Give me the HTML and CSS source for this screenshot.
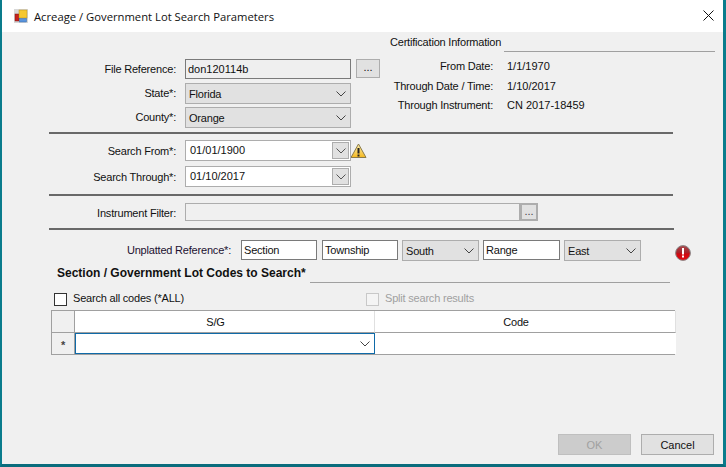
FILE: index.html
```html
<!DOCTYPE html>
<html lang="en">
<head>
    <meta charset="UTF-8">
    <meta name="viewport" content="width=device-width, initial-scale=1.0">
    <title>Acreage / Government Lot Search Parameters</title>
    <link rel="stylesheet" href="styles.css">
</head>
<body>
    <div class="window">
        <div class="titlebar">
            <svg class="app-icon" width="14" height="14" viewBox="0 0 14 14">
                <rect x="0" y="0" width="14" height="14" fill="#d8d8d8"/>
                <rect x="1" y="5" width="4" height="7" fill="#c8201c" stroke="#7a1a18" stroke-width="0.5"/>
                <rect x="5" y="1" width="8" height="8" fill="#f6c832" stroke="#b8901c" stroke-width="0.5"/>
                <rect x="5.5" y="9.5" width="7" height="3.5" fill="#5a94dc" stroke="#3468a8" stroke-width="0.5"/>
            </svg>
            <span class="title">Acreage / Government Lot Search Parameters</span>
            <svg class="close-icon" width="11" height="11" viewBox="0 0 11 11">
                <path d="M.5.5l10 10M10.5.5l-10 10" stroke="#111" stroke-width="1" fill="none"/>
            </svg>
        </div>

        <div class="content">
            <div class="top">
                <div class="file-form">
                    <label>File Reference:</label>
                    <div class="readonly-input">don120114b</div>
                    <button class="dots-btn" type="button">...</button>

                    <label>State*:</label>
                    <div class="combo">Florida
                        <svg class="chevron" width="10" height="6" viewBox="0 0 10 6"><path d="M.5.5L5 5 9.500.5" stroke="#444" fill="none"/></svg>
                    </div>
                    <span></span>

                    <label>County*:</label>
                    <div class="combo">Orange
                        <svg class="chevron" width="10" height="6" viewBox="0 0 10 6"><path d="M.5.5L5 5 9.500.5" stroke="#444" fill="none"/></svg>
                    </div>
                    <span></span>
                </div>

                <div class="cert">
                    <div class="cert-head">
                        <span>Certification Information</span>
                        <div class="thin-line"></div>
                    </div>
                    <div class="cert-grid">
                        <span class="cert-label">From Date:</span><span class="value">1/1/1970</span>
                        <span class="cert-label">Through Date / Time:</span><span class="value">1/10/2017</span>
                        <span class="cert-label">Through Instrument:</span><span class="value">CN 2017-18459</span>
                    </div>
                </div>
            </div>

            <div class="rule"></div>

            <div class="dates">
                <label>Search From*:</label>
                <div class="date-field">01/01/1900
                    <div class="date-drop"><svg width="10" height="6" viewBox="0 0 10 6"><path d="M.5.5L5 5 9.500.5" stroke="#555" fill="none"/></svg></div>
                </div>
                <svg class="warn-icon" width="17" height="16" viewBox="0 0 17 16">
                    <defs>
                        <linearGradient id="warnFill" x1="0" y1="0" x2="0" y2="1">
                            <stop offset="0" stop-color="#fdf0b0"/>
                            <stop offset="1" stop-color="#f5b81e"/>
                        </linearGradient>
                    </defs>
                    <path d="M8.500 1L16 14.500H1z" fill="url(#warnFill)" stroke="#8a7a4a" stroke-linejoin="round"/>
                    <rect x="7.500" y="5" width="2" height="5.500" fill="#222"/>
                    <rect x="7.500" y="11.500" width="2" height="2" fill="#222"/>
                </svg>

                <label>Search Through*:</label>
                <div class="date-field">01/10/2017
                    <div class="date-drop"><svg width="10" height="6" viewBox="0 0 10 6"><path d="M.5.5L5 5 9.500.5" stroke="#555" fill="none"/></svg></div>
                </div>
                <span></span>
            </div>

            <div class="rule"></div>

            <div class="filter">
                <label>Instrument Filter:</label>
                <div class="filter-box"></div>
                <button class="filter-btn" type="button">...</button>
            </div>

            <div class="rule rule-wide"></div>

            <div class="unplatted">
                <label>Unplatted Reference*:</label>
                <div class="text-box text-box-first">Section</div>
                <div class="text-box">Township</div>
                <div class="combo">South
                    <svg class="chevron" width="10" height="6" viewBox="0 0 10 6"><path d="M.5.5L5 5 9.500.5" stroke="#444" fill="none"/></svg>
                </div>
                <div class="text-box text-box-range">Range</div>
                <div class="combo">East
                    <svg class="chevron" width="10" height="6" viewBox="0 0 10 6"><path d="M.5.5L5 5 9.500.5" stroke="#444" fill="none"/></svg>
                </div>
                <svg class="error-icon" width="16" height="16" viewBox="0 0 16 16">
                    <defs>
                        <linearGradient id="errorFill" x1="0" y1="0" x2="0" y2="1">
                            <stop offset="0" stop-color="#a8484c"/>
                            <stop offset="0.5" stop-color="#a82028"/>
                            <stop offset="0.55" stop-color="#d00810"/>
                            <stop offset="1" stop-color="#e00c14"/>
                        </linearGradient>
                    </defs>
                    <circle cx="8" cy="8" r="7.400" fill="url(#errorFill)" stroke="#8a8a8a" stroke-width="1"/>
                    <rect x="7" y="3" width="2" height="6.500" fill="#fff"/>
                    <rect x="7" y="10.500" width="2" height="2" fill="#fff"/>
                </svg>
            </div>

            <div class="codes-head">
                <span>Section / Government Lot Codes to Search*</span>
                <div class="thin-line"></div>
            </div>

            <div class="checks">
                <div class="check-item">
                    <div class="checkbox"></div>
                    <span>Search all codes (*ALL)</span>
                </div>
                <div class="check-item check-disabled">
                    <div class="checkbox"></div>
                    <span>Split search results</span>
                </div>
            </div>

            <div class="grid">
                <div class="grid-corner"></div>
                <div class="grid-head">S/G</div>
                <div class="grid-head">Code</div>
                <div class="grid-rowhead">*</div>
                <div class="grid-edit">
                    <svg class="chevron" width="10" height="6" viewBox="0 0 10 6"><path d="M.5.5L5 5 9.500.5" stroke="#444" fill="none"/></svg>
                </div>
                <div class="grid-cell"></div>
            </div>

            <div class="footer">
                <button class="btn btn-disabled" type="button">OK</button>
                <button class="btn" type="button">Cancel</button>
            </div>
        </div>
    </div>
</body>
</html>
```

FILE: styles.css
```css
* {
    box-sizing: border-box;
}

body {
    margin: 0;
    width: 726px;
    height: 467px;
    overflow: hidden;
    font-family: "Liberation Sans", Arial, sans-serif;
    font-size: 11px;
    letter-spacing: -0.2px;
    color: #111;
}

.window {
    width: 726px;
    height: 467px;
    display: flex;
    flex-direction: column;
    background-color: #f0f0f0;
    border-left: 2px solid #0a7c8c;
    border-right: 3px solid #0a7c8c;
    border-bottom: 3px solid #0a6c7c;
}

.titlebar {
    height: 32px;
    flex: none;
    display: flex;
    align-items: center;
    padding-left: 12px;
    padding-right: 9px;
    background-color: #fff;
}

.title {
    margin-left: 6px;
    font-family: "Open Sans", sans-serif;
    font-size: 11.25px;
    letter-spacing: 0;
}

.close-icon {
    margin-left: auto;
    margin-bottom: 2px;
}

.content {
    flex: 1;
    display: flex;
    flex-direction: column;
    padding-left: 47px;
}

.top {
    display: flex;
    height: 100px;
}

label {
    text-align: right;
}

.value {
    letter-spacing: 0;
}

.file-form {
    width: 331px;
    padding-top: 27px;
    display: grid;
    grid-template-columns: 127px 166px 24px;
    grid-auto-rows: 24px;
    column-gap: 9px;
    align-items: start;
}

.file-form label {
    line-height: 20px;
}

.file-form .dots-btn {
    margin-left: -4px;
}

.readonly-input {
    height: 20px;
    padding-left: 2px;
    line-height: 18px;
    letter-spacing: 0;
    border: 1px solid #7a7a7a;
    background-color: #efefef;
}

.dots-btn {
    width: 24px;
    height: 19px;
    padding: 0 0 4px;
    border: 1px solid #adadad;
    background-color: #e1e1e1;
    font: inherit;
    color: #111;
}

.combo {
    position: relative;
    height: 21px;
    padding-left: 3px;
    line-height: 20px;
    border: 1px solid #adadad;
    background-color: #e1e1e1;
}

.chevron {
    position: absolute;
    right: 4px;
    top: 7px;
}

.cert {
    width: 325px;
    margin-left: 10px;
    padding-top: 1px;
}

.cert-head {
    display: flex;
    align-items: flex-end;
    height: 15px;
}

.cert-head span {
    white-space: nowrap;
}

.cert-head .thin-line {
    width: 211px;
    margin-left: auto;
    margin-bottom: -4px;
}

.thin-line {
    height: 1px;
    background-color: #a0a0a0;
}

.cert-grid {
    margin-top: 11px;
    display: grid;
    grid-template-columns: 103px auto;
    column-gap: 14px;
    row-gap: 5.5px;
    line-height: 14px;
}

.cert-label {
    text-align: right;
    white-space: nowrap;
}

.rule {
    width: 624px;
    height: 2px;
    flex: none;
    background-color: #696969;
}

.rule-wide {
    width: 625px;
}

.dates {
    padding-top: 6px;
    display: grid;
    grid-template-columns: 127px 166px 17px;
    grid-template-rows: 21px 21px;
    column-gap: 9px;
    row-gap: 5px;
    align-items: center;
    margin-bottom: 7px;
}

.warn-icon {
    margin-left: -10px;
}

.date-field {
    position: relative;
    height: 21px;
    padding-left: 4px;
    line-height: 19px;
    letter-spacing: 0;
    border: 1px solid #adadad;
    background-color: #fff;
}

.date-drop {
    position: absolute;
    right: 1px;
    top: 1px;
    width: 17px;
    height: 17px;
    display: flex;
    align-items: center;
    justify-content: center;
    border: 1px solid #adadad;
    background-color: #e1e1e1;
}

.filter {
    display: flex;
    align-items: center;
    padding-top: 7px;
    margin-bottom: 7px;
}

.filter label {
    width: 127px;
    margin-right: 9px;
    padding-top: 1px;
}

.filter-box {
    width: 335px;
    height: 18px;
    border: 1px solid #adadad;
    background-color: #f0f0f0;
}

.filter-btn {
    width: 18px;
    height: 18px;
    padding: 0 0 4px;
    border: 2px solid #adadad;
    background-color: #e1e1e1;
    font: inherit;
    color: #444;
}

.unplatted {
    display: flex;
    align-items: flex-start;
    padding-top: 10px;
    padding-left: 77px;
}

.unplatted label {
    width: 105px;
    margin-right: 10px;
    line-height: 20px;
    white-space: nowrap;
    color: #1c1030;
}

.text-box {
    width: 76px;
    height: 20px;
    margin-right: 4px;
    padding-left: 2px;
    line-height: 18px;
    border: 1px solid #7a7a7a;
    background-color: #fff;
}

.text-box-first {
    margin-right: 5px;
}

.text-box-range {
    width: 77px;
}

.unplatted .combo {
    width: 77px;
    margin-right: 4px;
}

.error-icon {
    margin-left: 30px;
    margin-top: 5px;
}

.codes-head {
    display: flex;
    padding-left: 8px;
    height: 14px;
    margin-top: 5px;
    font-size: 12px;
    letter-spacing: 0;
    font-weight: bold;
    white-space: nowrap;
}

.codes-head .thin-line {
    width: 360px;
    margin-left: 4px;
    margin-top: 16px;
}

.checks {
    display: flex;
    margin-top: 11px;
    padding-left: 5px;
}

.check-item {
    display: flex;
    align-items: center;
    height: 14px;
}

.check-item:first-child {
    width: 312px;
}

.checkbox {
    width: 13px;
    height: 13px;
    margin-top: 2px;
    margin-right: 6px;
    border: 1px solid #333;
    background-color: #fff;
}

.check-disabled {
    color: #a0a0a0;
}

.check-disabled .checkbox {
    border-color: #c8c8c8;
    background-color: #f4f4f4;
}

.grid {
    width: 624px;
    margin-top: 5px;
    margin-left: 2px;
    display: grid;
    grid-template-columns: 23px 300px 301px;
    grid-template-rows: 22px 21px;
    border: 1px solid #a0a0a0;
}

.grid-corner {
    border-right: 1px solid #a0a0a0;
    border-bottom: 1px solid #a0a0a0;
    background-color: #f0f0f0;
}

.grid-head {
    display: flex;
    align-items: center;
    justify-content: center;
    padding-right: 18px;
    background-color: #fff;
    border-right: 1px solid #e0e0e0;
    border-bottom: 1px solid #a0a0a0;
}

.grid-rowhead {
    display: flex;
    align-items: center;
    justify-content: center;
    padding-top: 3px;
    border-right: 1px solid #a0a0a0;
    font-weight: bold;
    color: #444;
    background-color: #f0f0f0;
}

.grid-edit {
    position: relative;
    border: 1px solid #0f6aa8;
    background-color: #fff;
}

.grid-cell {
    background-color: #fff;
}

.footer {
    margin-top: auto;
    margin-right: 9px;
    margin-bottom: 9px;
    display: flex;
    justify-content: flex-end;
    gap: 10px;
}

.btn {
    width: 73px;
    height: 21px;
    padding: 0;
    border: 1px solid #adadad;
    background-color: #e1e1e1;
    font: inherit;
    color: #111;
}

.btn-disabled {
    background-color: #cccccc;
    border-color: #bfbfbf;
    color: #a0a0a0;
}
```
